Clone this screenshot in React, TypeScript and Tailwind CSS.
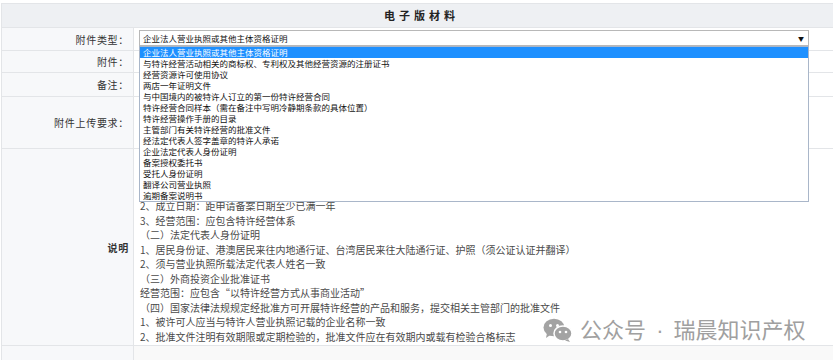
const options = [
  "企业法人营业执照或其他主体资格证明",
  "与特许经营活动相关的商标权、专利权及其他经营资源的注册证书",
  "经营资源许可使用协议",
  "两店一年证明文件",
  "与中国境内的被特许人订立的第一份特许经营合同",
  "特许经营合同样本（需在备注中写明冷静期条款的具体位置）",
  "特许经营操作手册的目录",
  "主管部门有关特许经营的批准文件",
  "经法定代表人签字盖章的特许人承诺",
  "企业法定代表人身份证明",
  "备案授权委托书",
  "受托人身份证明",
  "翻译公司营业执照",
  "逾期备案说明书",
];

// first three lines of the notes sit under the open dropdown
const notes = [
  "2、成立日期：距申请备案日期至少已满一年",
  "3、经营范围：应包含特许经营体系",
  "（二）法定代表人身份证明",
  "1、居民身份证、港澳居民来往内地通行证、台湾居民来往大陆通行证、护照（须公证认证并翻译）",
  "2、须与营业执照所载法定代表人姓名一致",
  "（三）外商投资企业批准证书",
  "经营范围：应包含“以特许经营方式从事商业活动”",
  "（四）国家法律法规规定经批准方可开展特许经营的产品和服务，提交相关主管部门的批准文件",
  "1、被许可人应当与特许人营业执照记载的企业名称一致",
  "2、批准文件注明有效期限或定期检验的，批准文件应在有效期内或载有检验合格标志",
];

function WeChatIcon() {
  return (
    <svg width="30" height="24" viewBox="0 0 30 24">
      <ellipse cx="11" cy="9.5" rx="10.5" ry="8.8" fill="#a3a3a3" />
      <path d="M4 15 L3 20 L8 16.5 Z" fill="#a3a3a3" />
      <circle cx="7.5" cy="7.5" r="1.5" fill="#fff" />
      <circle cx="14.5" cy="7.5" r="1.5" fill="#fff" />
      <ellipse cx="20" cy="15.5" rx="9" ry="7.5" fill="#a3a3a3" stroke="#fff" strokeWidth="1.5" />
      <path d="M25 21 L27 24 L22 22.5 Z" fill="#a3a3a3" />
      <circle cx="17" cy="14" r="1.3" fill="#fff" />
      <circle cx="23" cy="14" r="1.3" fill="#fff" />
    </svg>
  );
}

function Label({ text, bold }: { text: string; bold?: boolean }) {
  return (
    <div
      className={
        "flex items-center justify-end pr-[4px] bg-[#f7f8fa] border-r border-[#e3e5e8] text-[10px] text-[#333] tracking-[0.7px] " +
        (bold ? "font-bold" : "")
      }
    >
      {text}
    </div>
  );
}

export default function App() {
  return (
    <div
      className="w-[833px] h-[360px] overflow-hidden bg-white pt-[3px] pl-[1px] relative"
      style={{ fontFamily: '"Noto Sans CJK SC", "Noto Sans", sans-serif' }}
    >
      <div className="border-l border-t border-[#e3e5e8]">
        {/* header */}
        <div className="h-[24px] bg-[#eef0f3] border-b border-[#e3e5e8] flex items-center justify-center">
          <span className="text-[11px] font-bold text-[#222] tracking-[4px] pl-[8px]">电子版材料</span>
        </div>

        {/* 附件类型 */}
        <div className="grid grid-cols-[132px_1fr] h-[23px] border-b border-[#e3e5e8]">
          <Label text="附件类型：" />
          <div className="relative pl-[5px] pt-[2px]">
            <div className="w-[670px] h-[16px] border border-[#b8b8b8] bg-white flex items-center justify-between pl-[3px] pr-[4px] text-[8.5px] text-[#111]">
              <span>企业法人营业执照或其他主体资格证明</span>
              <span className="text-[6px]">▼</span>
            </div>
            <div className="absolute left-[5px] top-[18px] w-[670px] h-[156px] border border-[#a9b6c9] bg-white z-10 text-[8.5px] text-[#111]">
              {options.map((o, i) => (
                <div
                  key={o}
                  className={
                    "h-[11px] leading-[11px] pl-[3px] whitespace-nowrap " +
                    (i === 0 ? "bg-[#1e90ff] text-white" : "")
                  }
                >
                  {o}
                </div>
              ))}
            </div>
          </div>
        </div>

        {/* 附件 */}
        <div className="grid grid-cols-[132px_1fr] h-[22px] border-b border-[#e3e5e8]">
          <Label text="附件：" />
          <div />
        </div>

        {/* 备注 */}
        <div className="grid grid-cols-[132px_1fr] h-[24px] border-b border-[#e3e5e8]">
          <Label text="备注：" />
          <div />
        </div>

        {/* 附件上传要求 */}
        <div className="grid grid-cols-[132px_1fr] h-[52px] border-b border-[#e3e5e8]">
          <Label text="附件上传要求：" />
          <div />
        </div>

        {/* 说明 */}
        <div className="grid grid-cols-[132px_1fr] h-[197px] border-b border-[#e3e5e8]">
          <Label text="说明" bold />
          <div className="pl-[6px] pt-[50px] text-[10px] leading-[14.5px] text-[#4a4a4a]">
            {notes.map((n) => (
              <div key={n} className="whitespace-nowrap">
                {n}
              </div>
            ))}
          </div>
        </div>

        <div className="grid grid-cols-[132px_1fr] h-[20px]">
          <div className="bg-[#f7f8fa] border-r border-[#e3e5e8]" />
          <div className="bg-[#f9f9f9]" />
        </div>
      </div>

      {/* watermark */}
      <div className="absolute left-[543px] top-[315px] flex items-center gap-[7px] text-[#a0a0a0]">
        <WeChatIcon />
        <span className="text-[22px] leading-[26px]">
          公众号
          <span className="mx-[4px]" style={{ fontFamily: '"Liberation Sans", sans-serif' }}>
            {" · "}
          </span>
          瑞晨知识产权
        </span>
      </div>
    </div>
  );
}
